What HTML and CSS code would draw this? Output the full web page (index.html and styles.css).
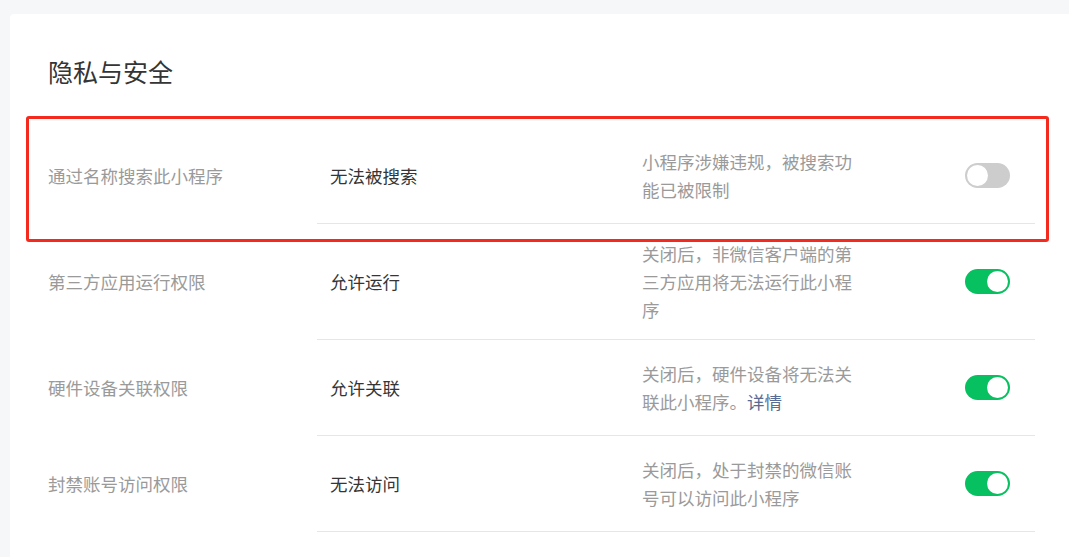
FILE: index.html
```html
<!DOCTYPE html>
<html lang="zh-CN">
<head>
    <meta charset="UTF-8">
    <title>隐私与安全</title>
    <link rel="stylesheet" href="styles.css">
</head>
<body>
    <div class="page">
        <div class="card">
            <h2 class="card-title">隐私与安全</h2>

            <div class="setting-list">
                <div class="setting-row highlighted">
                    <div class="setting-label">通过名称搜索此小程序</div>
                    <div class="setting-main">
                        <div class="setting-value">无法被搜索</div>
                        <div class="setting-desc">小程序涉嫌违规，被搜索功能已被限制</div>
                        <span class="switch"></span>
                    </div>
                    <div class="mark-box"></div>
                </div>

                <div class="setting-row">
                    <div class="setting-label">第三方应用运行权限</div>
                    <div class="setting-main">
                        <div class="setting-value">允许运行</div>
                        <div class="setting-desc">关闭后，非微信客户端的第三方应用将无法运行此小程序</div>
                        <span class="switch on"></span>
                    </div>
                </div>

                <div class="setting-row">
                    <div class="setting-label">硬件设备关联权限</div>
                    <div class="setting-main">
                        <div class="setting-value">允许关联</div>
                        <div class="setting-desc">关闭后，硬件设备将无法关联此小程序。<a href="#" class="link">详情</a></div>
                        <span class="switch on"></span>
                    </div>
                </div>

                <div class="setting-row">
                    <div class="setting-label">封禁账号访问权限</div>
                    <div class="setting-main">
                        <div class="setting-value">无法访问</div>
                        <div class="setting-desc">关闭后，处于封禁的微信账号可以访问此小程序</div>
                        <span class="switch on"></span>
                    </div>
                </div>
            </div>
        </div>
    </div>
</body>
</html>
```

FILE: styles.css
```css
/* Reset */
* {
    margin: 0;
    padding: 0;
    box-sizing: border-box;
}

body {
    font-family: "Noto Sans CJK SC", "Microsoft YaHei", sans-serif;
    background: #f6f7f9;
    color: #353535;
    overflow: hidden;
}

.page {
    padding: 14px 0 0 10px;
}

.card {
    background: #fff;
    border-radius: 4px 0 0 0;
    padding: 40px 34px 40px 38px;
    min-height: 560px;
}

.card-title {
    font-size: 25px;
    font-weight: normal;
    line-height: 35px;
    color: #353535;
    margin-bottom: 39px;
}

/* Setting rows */
.setting-row {
    position: relative;
    display: flex;
    align-items: center;
    font-size: 17.5px;
    line-height: 28px;
}

.setting-label {
    width: 269px;
    flex-shrink: 0;
    color: #9a9a9a;
}

.setting-main {
    flex: 1;
    display: flex;
    align-items: center;
    min-height: 96px;
    padding: 15.5px 25px 15.5px 13px;
    border-bottom: 1px solid #e6e6e6;
}

.setting-value {
    width: 312px;
    flex-shrink: 0;
    color: #353535;
}

.setting-desc {
    width: 220px;
    color: #9a9a9a;
}

.link {
    color: #576b95;
    text-decoration: none;
}

/* Switch */
.switch {
    position: relative;
    margin-left: auto;
    width: 45px;
    height: 25px;
    border-radius: 13px;
    background: #cdcdcd;
    flex-shrink: 0;
}

.switch::after {
    content: "";
    position: absolute;
    top: 2px;
    left: 2px;
    width: 21px;
    height: 21px;
    border-radius: 50%;
    background: #fff;
}

.switch.on {
    background: #07c160;
}

.switch.on::after {
    left: 22px;
}

/* Red annotation box over the first row */
.mark-box {
    position: absolute;
    top: -12px;
    left: -22px;
    right: -14px;
    bottom: -18px;
    border: 3px solid #f42a1e;
    border-radius: 3px;
    pointer-events: none;
}
```
